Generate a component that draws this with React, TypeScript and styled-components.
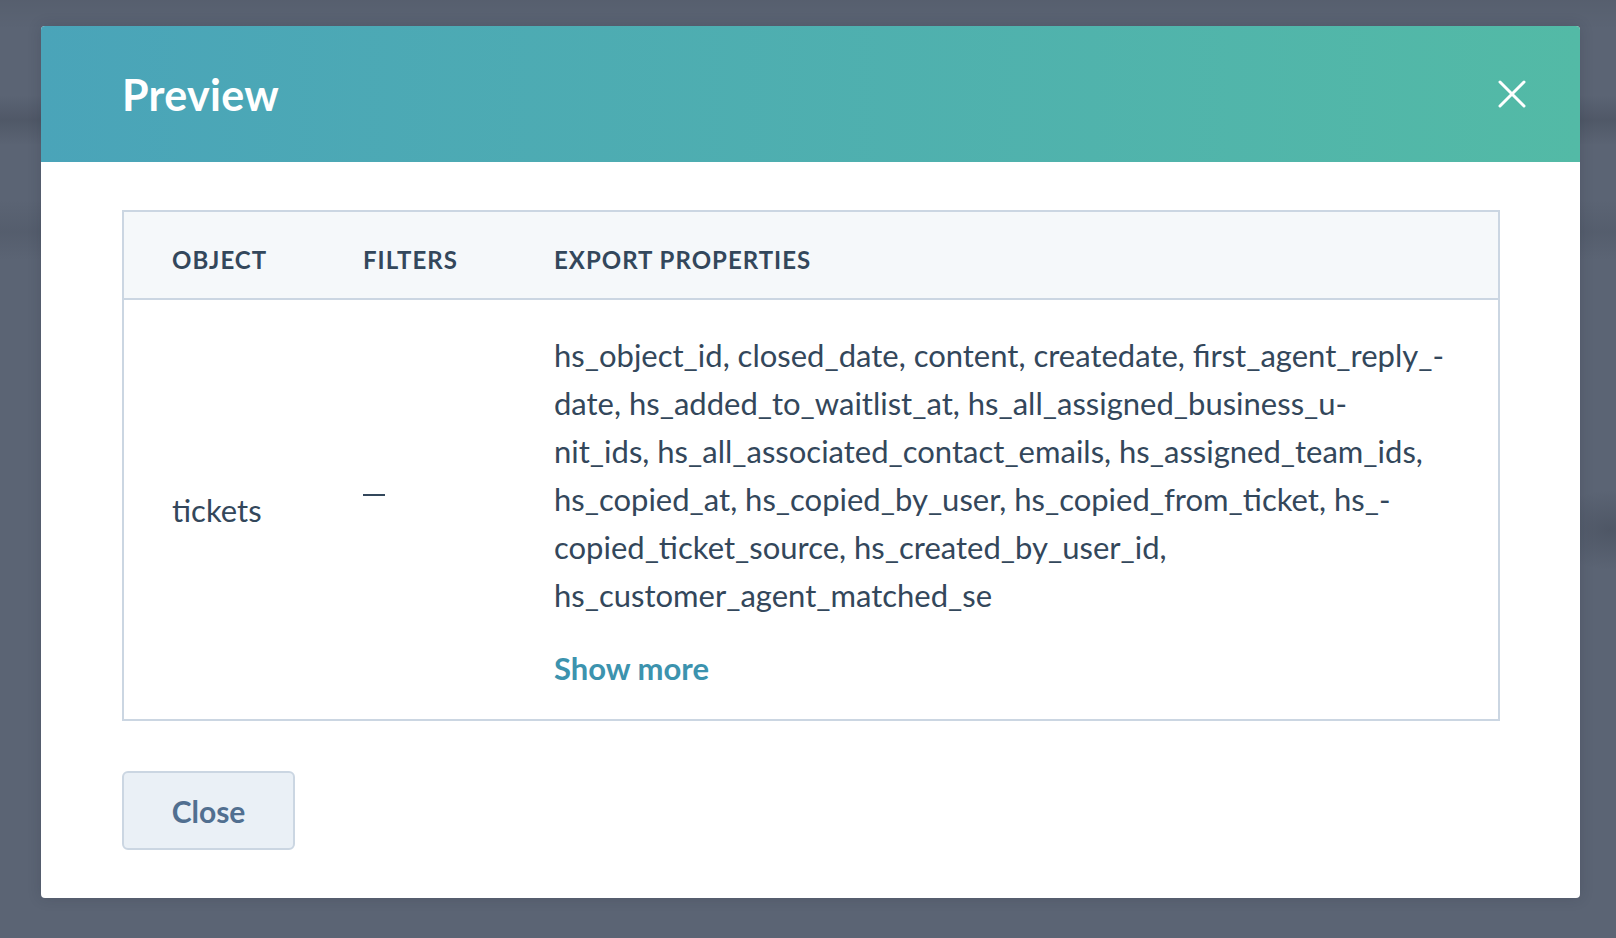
import React from "react";
import styled, { createGlobalStyle } from "styled-components";

const GlobalStyle = createGlobalStyle`
  html, body {
    margin: 0;
    padding: 0;
    height: 100%;
  }
  body {
    font-family: "Lato", "Noto Sans", sans-serif;
    color: #33475b;
    -webkit-font-smoothing: antialiased;
  }
  #root {
    height: 100%;
  }
`;

const Backdrop = styled.div`
  width: 1616px;
  height: 938px;
  box-sizing: border-box;
  padding: 26px 0 0 41px;
  overflow: hidden;
  background:
    radial-gradient(ellipse 60px 40px at 1610px 530px, rgba(40, 46, 58, 0.25), rgba(0, 0, 0, 0)),
    linear-gradient(180deg, rgba(0, 0, 0, 0.05) 0px, rgba(0, 0, 0, 0) 30px),
    linear-gradient(180deg, rgba(0, 0, 0, 0) 95px, rgba(40, 46, 58, 0.22) 120px, rgba(0, 0, 0, 0) 145px),
    linear-gradient(180deg, rgba(0, 0, 0, 0) 200px, rgba(40, 46, 58, 0.12) 232px, rgba(0, 0, 0, 0) 260px),
    #5b6474;
`;

const Modal = styled.div`
  width: 1539px;
  background: #ffffff;
  border-radius: 4px;
  overflow: hidden;
  box-shadow: 0 0 14px rgba(30, 36, 48, 0.18);
`;

const Header = styled.header`
  height: 136px;
  display: flex;
  align-items: center;
  justify-content: space-between;
  padding: 0 54px 0 81px;
  background: linear-gradient(to right, #4aa4b9, #53baa6);
`;

const Title = styled.h3`
  margin: 0;
  font-size: 43px;
  font-weight: 700;
  color: #ffffff;
  letter-spacing: 0.3px;
`;

const CloseIcon = styled.button`
  display: flex;
  width: 28px;
  height: 28px;
  padding: 0;
  border: none;
  background: none;
  cursor: pointer;
`;

const Body = styled.div`
  padding: 48px 80px 48px 81px;
  display: flex;
  flex-direction: column;
  align-items: flex-start;
`;

const Table = styled.div`
  align-self: stretch;
  border: 2px solid #cbd6e2;
  display: grid;
  grid-template-columns: 191px 191px 1fr;
`;

const HeadCell = styled.div`
  height: 88px;
  display: flex;
  align-items: center;
  padding: 8px 0 0 48px;
  box-sizing: border-box;
  background: #f5f8fa;
  border-bottom: 2px solid #cbd6e2;
  font-size: 24px;
  font-weight: 700;
  letter-spacing: 1px;
  text-transform: uppercase;
  color: #33475b;
`;

const Cell = styled.div<{ $lift?: number }>`
  display: flex;
  align-items: center;
  padding: 0 0 ${(p) => p.$lift ?? 0}px 48px;
  font-size: 31px;
  line-height: 48px;
  color: #33475b;
`;

const PropsCell = styled.div`
  padding: 31px 48px 27px 48px;
  font-size: 31px;
  line-height: 48px;
  color: #33475b;
`;

const PropLine = styled.span`
  display: block;
  white-space: nowrap;
`;

const Dash = styled.span`
  display: block;
  width: 22px;
  height: 2px;
  background: #33475b;
`;

const ShowMore = styled.button`
  display: block;
  margin-top: 25px;
  padding: 0;
  border: none;
  background: none;
  font-family: inherit;
  font-size: 31px;
  line-height: 48px;
  font-weight: 700;
  color: #3c93ae;
  cursor: pointer;
`;

const Button = styled.button`
  margin-top: 50px;
  width: 173px;
  height: 79px;
  box-sizing: border-box;
  border: 2px solid #cbd6e2;
  border-radius: 6px;
  background: #eaf0f6;
  font-family: inherit;
  font-size: 30px;
  font-weight: 700;
  color: #516f90;
  cursor: pointer;
`;

const propertyLines = [
  "hs_object_id, closed_date, content, createdate, first_agent_reply_-",
  "date, hs_added_to_waitlist_at, hs_all_assigned_business_u-",
  "nit_ids, hs_all_associated_contact_emails, hs_assigned_team_ids,",
  "hs_copied_at, hs_copied_by_user, hs_copied_from_ticket, hs_-",
  "copied_ticket_source, hs_created_by_user_id,",
  "hs_customer_agent_matched_se",
];

export default function App() {
  return (
    <>
      <GlobalStyle />
      <Backdrop>
        <Modal>
          <Header>
            <Title>Preview</Title>
            <CloseIcon aria-label="Close">
              <svg width="28" height="28" viewBox="0 0 28 28">
                <path d="M2 2 L26 26 M26 2 L2 26" stroke="#ffffff" strokeWidth="3" strokeLinecap="round" />
              </svg>
            </CloseIcon>
          </Header>
          <Body>
            <Table>
              <HeadCell>Object</HeadCell>
              <HeadCell>Filters</HeadCell>
              <HeadCell>Export properties</HeadCell>
              <Cell>tickets</Cell>
              <Cell $lift={30}>
                <Dash />
              </Cell>
              <PropsCell>
                {propertyLines.map((line) => (
                  <PropLine key={line}>{line}</PropLine>
                ))}
                <ShowMore>Show more</ShowMore>
              </PropsCell>
            </Table>
            <Button>Close</Button>
          </Body>
        </Modal>
      </Backdrop>
    </>
  );
}
